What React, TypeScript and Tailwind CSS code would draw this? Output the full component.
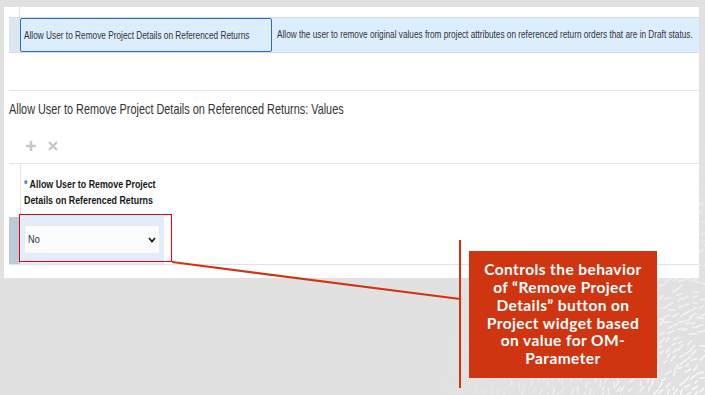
import React from 'react';

// deterministic pseudo-random for the background texture
const rand = (() => {
  let s = 12345;
  return () => {
    s = (s * 1103515245 + 12345) % 2147483648;
    return s / 2147483648;
  };
})();

const dashes: { x1: number; y1: number; x2: number; y2: number; o: number }[] = [];
const cx = 730;
const cy = 430;
for (let r = 30; r < 330; r += 6) {
  const step = 7.5;
  const count = Math.floor(((Math.PI / 2) * r) / step);
  for (let i = 0; i < count; i++) {
    const a = Math.PI + (i / count) * (Math.PI / 2) + rand() * 0.04;
    const rr = r + (rand() - 0.5) * 4;
    const x = cx + rr * Math.cos(a);
    const y = cy + rr * Math.sin(a);
    const len = 3 + rand() * 4;
    const t = a + Math.PI / 2 + (rand() - 0.5) * 0.9;
    const o = Math.max(0, 1 - r / 300) * 0.95;
    if (o <= 0.02 || rand() < 0.2) continue;
    dashes.push({
      x1: x - (len / 2) * Math.cos(t),
      y1: y - (len / 2) * Math.sin(t),
      x2: x + (len / 2) * Math.cos(t),
      y2: y + (len / 2) * Math.sin(t),
      o,
    });
  }
}

const Texture = () => (
  <svg className="absolute inset-0 z-0" width="705" height="395" viewBox="0 0 705 395">
    {dashes.map((d, i) => (
      <line
        key={i}
        x1={d.x1}
        y1={d.y1}
        x2={d.x2}
        y2={d.y2}
        stroke="#ffffff"
        strokeOpacity={d.o}
        strokeWidth="1.6"
        strokeLinecap="round"
      />
    ))}
  </svg>
);

export default function App() {
  return (
    <div className="relative w-[705px] h-[395px] overflow-hidden bg-[#e0e1e0] pt-[7px] pl-[4px] pr-[6px] font-['Liberation_Sans',Arial,sans-serif]">
      <Texture />

      {/* SCREENSHOT PANEL (the captured page is horizontally squeezed) */}
      <div className="relative z-10 h-[271px] bg-white">
        {/* cut-off row above */}
        <div className="flex h-[10px] pl-[5px]">
          <div className="w-[11px] border-r border-[#dde2e7]" />
        </div>

        {/* selected parameter row */}
        <div className="ml-[5px] flex h-[36px] border-y border-[#d5dce3] bg-[#dceefd]">
          <div className="w-[11px] shrink-0 bg-[#dde6ee]" />
          <div className="flex w-[252px] shrink-0 items-center rounded-[2px] border border-[#2c6bc2] pl-[3px] text-[11.2px] text-[#333]">
            <span className="inline-block origin-left scale-x-[0.74] whitespace-nowrap">
              Allow User to Remove Project Details on Referenced Returns
            </span>
          </div>
          <div className="flex min-w-0 flex-1 items-center pl-[5px] text-[10.3px] text-[#333]">
            <span className="inline-block origin-left scale-x-[0.8] whitespace-nowrap">
              Allow the user to remove original values from project attributes on referenced return orders that are in Draft status.
            </span>
          </div>
        </div>

        {/* values section */}
        <div className="ml-[5px] mt-[37px] border-t border-[#e2e6ea]">
          <div className="flex h-[38px] items-center text-[14.5px] text-[#333]">
            <span className="inline-block origin-left scale-x-[0.75] whitespace-nowrap">
              Allow User to Remove Project Details on Referenced Returns: Values
            </span>
          </div>

          <div className="flex h-[34px] items-center gap-[12px] pl-[17px]">
            <svg width="10" height="10" viewBox="0 0 10 10">
              <path d="M5 0v10M0 5h10" stroke="#c4c8cc" strokeWidth="2.6" />
            </svg>
            <svg width="10" height="10" viewBox="0 0 10 10">
              <path d="M1 1l8 8M9 1l-8 8" stroke="#c4c8cc" strokeWidth="2.4" />
            </svg>
          </div>

          <div className="border-t border-[#e2e6ea]">
            <div className="flex h-[51px] pl-[11px]">
              <div className="border-l border-[#e2e6ea] pl-[3px] pt-[12px] text-[11.5px] font-bold leading-[16px] text-[#161616]">
                <div>
                  <span className="inline-block origin-left scale-x-[0.77] whitespace-nowrap">
                    <span className="text-[#1d6ec6]">*</span> Allow User to Remove Project
                  </span>
                </div>
                <div>
                  <span className="inline-block origin-left scale-x-[0.77] whitespace-nowrap">
                    Details on Referenced Returns
                  </span>
                </div>
              </div>
            </div>

            <div className="flex h-[50px] border-b border-[#dfe4ea]">
              <div className="mt-[2px] w-[11px] shrink-0 bg-[#b9cbda]" />
              <div className="flex w-[144px] shrink-0 items-center bg-[#e2eefa] px-[4px]">
                <div className="flex h-[29px] w-full items-center justify-between border border-[#e4e9ee] bg-[#fafcfe] pl-[3px] pr-[3px] text-[11.5px] text-[#333]">
                  <span className="inline-block origin-left scale-x-[0.8]">No</span>
                  <svg width="8" height="6" viewBox="0 0 8 6">
                    <path d="M1 1l3 3.5L7 1" fill="none" stroke="#222" strokeWidth="1.8" />
                  </svg>
                </div>
              </div>
            </div>
          </div>
        </div>
      </div>

      {/* ANNOTATIONS */}
      <div className="absolute left-[19px] top-[214px] z-20 h-[48px] w-[153px] border-[1.5px] border-[#e8000a]" />
      <svg className="absolute inset-0 z-20" width="705" height="395" viewBox="0 0 705 395">
        <line x1="172" y1="262" x2="460" y2="299" stroke="#d03510" strokeWidth="2.2" />
        <line x1="460" y1="240" x2="460" y2="388" stroke="#d03510" strokeWidth="2" />
      </svg>
      <div className="absolute left-[469px] top-[251px] z-20 flex h-[127px] w-[188px] items-center justify-center bg-[#cf3510] text-center font-['Lato',sans-serif] text-[15.5px] font-bold leading-[17.8px] tracking-[0.4px] text-white">
        <p>
          Controls the behavior
          <br />
          of “Remove Project
          <br />
          Details” button on
          <br />
          Project widget based
          <br />
          on value for OM-
          <br />
          Parameter
        </p>
      </div>
    </div>
  );
}
